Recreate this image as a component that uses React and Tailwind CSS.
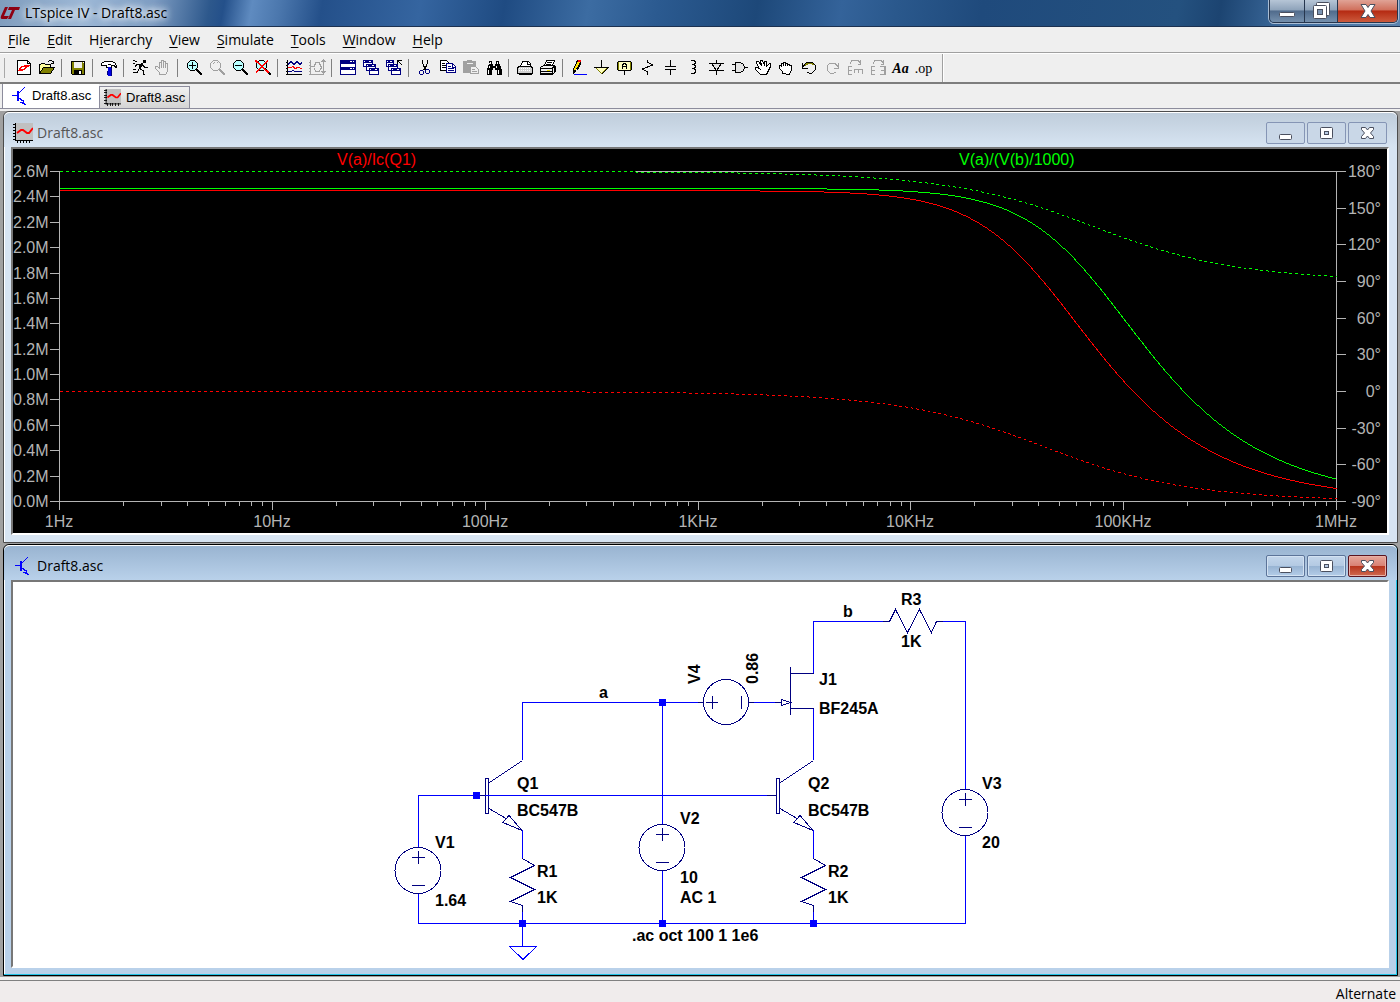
import React from "react";

const INK = "#000";
const NAVY = "#000080";
const GREY = "#a0a0a0";

function Glyph({ children, size = 18 }) {
  return (
    <svg
      width={size}
      height={size}
      viewBox="0 0 18 18"
      fill="none"
      stroke={INK}
      shapeRendering="crispEdges"
      aria-hidden="true"
    >
      {children}
    </svg>
  );
}

function Lens({ color, fill, children }) {
  return (
    <Glyph>
      <path d="M5.5 1.5h4l3 3v4l-3 3h-4l-3-3v-4z" stroke={color} fill={fill} />
      <path d="M11 10l6 6M12 10l5 5M11 11l5 5" stroke={color} />
      {children}
    </Glyph>
  );
}

function MiniWindow({ x, y, w = 9, h = 6 }) {
  return (
    <g>
      <rect x={x + 0.5} y={y + 0.5} width={w} height={h} fill="#fff" stroke={NAVY} />
      <path d={`M${x} ${y + 1.5}h${w + 1}`} stroke={NAVY} strokeWidth="3" />
      <path d={`M${x + w - 3} ${y + 1.5}h2M${x + 1} ${y + 1.5}h1`} stroke="#fff" />
    </g>
  );
}

const HAND =
  "M5.5 15.5v-2l-4-4v-2h2l2 2v-6h2v4-6h2v6-5h2v6-4h2v8l-2 3z";
const GRAB =
  "M5.5 14.5v-2l-3-3v-3h2v1-3h2v-1h2v1h2v1h2v1h2v5l-2 3v1z";

const icons = {
  New: (
    <Glyph>
      <path d="M2.5 1.5h10l3 3v11h-13z" fill="#fff" />
      <path d="M12.5 1.5v3h3" />
      <path d="M3 12l3-5h2l-2 3h3l-1 2zM9 6h6l-1 2h-2l-2 3h-2l2-3h-2z" fill="#f00" stroke="none" />
    </Glyph>
  ),
  Open: (
    <Glyph>
      <path d="M1.5 14.5v-9h1l1-1h3l1 1h5v3" fill="#ffff9c" />
      <path d="M1.5 14.5l4-6h11l-4 6z" fill="#808000" />
      <path d="M10 2.5h1M11 1.5h3M14 2.5h1M15.5 2v3M13 4.5h3" />
    </Glyph>
  ),
  Save: (
    <Glyph>
      <path d="M2.5 2.5h13v13h-12l-1-1z" fill="#808000" />
      <path d="M5 3h8v6h-8z" fill="#efefef" stroke="none" />
      <path d="M5 11h8v4h-8z" fill="#000" stroke="none" />
      <path d="M10 12h2v3h-2zM14 3h1v1h-1z" fill="#fff" stroke="none" />
    </Glyph>
  ),
  "Control Panel": (
    <Glyph>
      <path d="M1.5 6.5v-2l3-2h7l3 1 2 3v2l-2-1v-1h-3v2h-5v-2h-3z" fill="#fff" />
      <path d="M6 2.5h6M8 5.5h3" />
      <path d="M8 8h3v3h1v6h-4v-6z" fill="#0000e0" stroke="none" />
      <path d="M11.5 9v8M7.5 12v4" stroke="#000080" />
    </Glyph>
  ),
  Run: (
    <Glyph>
      <path d="M12 1h3v3h-3z" fill="#000" stroke="none" />
      <path d="M11.5 4.5l-4 5M10.5 4.5l-3 4M12 5l-3 5M6 5.5h5M12 6.5l2 2h3M6 5.5l-2 2M8 9.5l4 2v4h2M8 10.5l-2 3h-4M1.5 1.5h2M3.5 2.5h2M1.5 4.5h2M1.5 10.5h3" />
    </Glyph>
  ),
  Halt: (
    <Glyph>
      <path d={HAND} stroke={GREY} />
      <path d="M7.5 9v-6M9.5 9v-6M11.5 9v-5" stroke={GREY} />
    </Glyph>
  ),
  "Zoom in": (
    <Lens color={INK} fill="#b8ffff">
      <path d="M4 6.5h7M7.5 3v7" />
    </Lens>
  ),
  Pan: <Lens color={GREY} fill="none"><path d="M5 5l2-2M9 3h1" stroke={GREY} /></Lens>,
  "Zoom out": (
    <Lens color={INK} fill="#b8ffff">
      <path d="M4 6.5h7" />
    </Lens>
  ),
  "Zoom full": (
    <Lens color={INK} fill="#b8ffff">
      <path d="M1 1.5l13 12M2 1.5l13 12M14 1.5l-12 12" stroke="#f00" />
    </Lens>
  ),
  "Visible traces": (
    <Glyph>
      <path d="M2.5 1v15M1 15.5h16M1 3.5h2M1 6.5h2M1 9.5h2M1 12.5h2" />
      <path d="M3 5.5l3-3 3 3 3-3 3 3 2-2" stroke={NAVY} />
      <path d="M3 8.5h3l2-1 2 2 3-1 4 1" stroke="#f00" />
      <path d="M3 12.5h3l2-1 2 1h7" stroke={NAVY} />
    </Glyph>
  ),
  Autorange: (
    <Glyph>
      <path d="M2.5 1v15M1 15.5h15M1 3.5h2M1 6.5h2M1 9.5h2M1 12.5h2M3 7.5h3l2-4h3l2 4v2l-2 3h-3l-2-3M15.5 1v13M13.5 3l2-2 2 2M13.5 12l2 2 2-2" stroke={GREY} />
    </Glyph>
  ),
  "Tile windows": (
    <Glyph>
      <rect x="1.5" y="1.5" width="15" height="14" fill="#fff" stroke={NAVY} />
      <path d="M1 3h16M1 9h16" stroke={NAVY} strokeWidth="3" />
      <path d="M11 2.5h2M14 2.5h1M11 9.5h2M14 9.5h1" stroke="#fff" />
    </Glyph>
  ),
  "Cascade windows": (
    <Glyph>
      <MiniWindow x={1} y={1} />
      <MiniWindow x={4} y={5} />
      <MiniWindow x={7} y={9} />
    </Glyph>
  ),
  "Close all windows": (
    <Glyph>
      <MiniWindow x={1} y={1} w={7} />
      <MiniWindow x={3} y={5} />
      <MiniWindow x={6} y={9} />
      <path d="M12.5 5v-4h4M13 2l4 4" />
    </Glyph>
  ),
  Cut: (
    <Glyph>
      <path d="M6.5 1v3l1 2 1 3 2 2M11.5 1v3l-1 2-1 3-2 2" />
      <path d="M4.5 11.5h2l1 1v2l-1 1h-2l-1-1v-2zM10.5 10.5h2l1 1v2l-1 1h-2l-1-1v-2z" stroke={NAVY} />
    </Glyph>
  ),
  Copy: (
    <Glyph>
      <path d="M1.5 1.5h6l2 2v8h-8z" fill="#fff" />
      <path d="M3 4.5h3M3 6.5h4M3 8.5h4" />
      <path d="M7.5 4.5h6l3 3v6h-9z" fill="#fff" stroke={NAVY} />
      <path d="M13.5 5v3h3M9 7.5h3M9 9.5h6M9 11.5h6" stroke={NAVY} />
    </Glyph>
  ),
  Paste: (
    <Glyph>
      <path d="M1 2h4v-1h5v1h4v5h-6v7h-7z" fill={GREY} stroke="none" />
      <path d="M5 4.5h6" stroke="#efefef" />
      <path d="M8.5 7.5h5l3 3v4h-8z" stroke={GREY} fill="#efefef" />
      <path d="M10 10.5h3M10 12.5h5" stroke={GREY} />
    </Glyph>
  ),
  Find: (
    <Glyph>
      <path d="M4 2h3v3h1v2h2v-2h1v-3h3v3h1l2 6v5h-5v-5h-2v-2h-2v2h-1v5h-5v-5l2-6h1z" fill="#000" stroke="none" />
      <path d="M5.5 3v2M12.5 3v2M4.5 7v2M3.5 11v4M11.5 7v2M13.5 11v4" stroke="#fff" />
    </Glyph>
  ),
  "Print setup": (
    <Glyph>
      <path d="M4.5 7.5l2-5h6l2 2v3" fill="#fff" />
      <path d="M11.5 2v3h3" />
      <path d="M2.5 7.5h13l1 2v5h-15v-5z" fill="#d0d0d0" />
      <path d="M3 9.5h12M3 11.5h12" stroke="#fff" strokeDasharray="1 1" />
      <path d="M3 15.5h13" />
    </Glyph>
  ),
  Print: (
    <Glyph>
      <path d="M5.5 6.5l2-5h8l-2 5z" fill="#fff" />
      <path d="M8 3.5h5M7 5.5h5" />
      <path d="M1.5 8.5l3-2h11l1 1v5l-3 3h-12z" fill="#efefef" />
      <path d="M2 9.5h11l3-3M13.5 9v6M2 12.5h11M2 14.5h11M15.5 8v5" />
      <path d="M8 11.5h3" stroke="#e8d800" />
    </Glyph>
  ),
  Wire: (
    <Glyph>
      <path d="M3.5 12.5v-2l4-9 3 2-4 7z" fill="#ffe000" />
      <path d="M8 1h3v2h-3z" fill="#f00" stroke="none" />
      <path d="M10.5 3v2l-3 6M3.5 11v4M4.5 12v2M5.5 11v2" />
      <path d="M4 15.5h13" stroke="#00f" />
    </Glyph>
  ),
  Ground: (
    <Glyph>
      <path d="M8.5 1v8" />
      <path d="M2.5 8.5h12l-6 6z" fill="#ffffc0" stroke="#808000" />
      <path d="M1 8.5h15M8.5 15.5l7-7" />
    </Glyph>
  ),
  "Label net": (
    <Glyph>
      <path d="M2.5 2.5h12l1 1v7l-1 1h-12l-1-1v-7z" fill="#ffffc0" />
      <path d="M2.5 3v8M14.5 3v8" stroke="#808000" />
      <path d="M6.5 10v-5h1v-1h2v1h1v5M7 7.5h3M8.5 12v4" />
    </Glyph>
  ),
  Resistor: <Glyph><path d="M8.5 1v2l5 3-10 4 5 3v3" /></Glyph>,
  Capacitor: <Glyph><path d="M8.5 1v6M8.5 10v6M3 7.5h11M3 10.5h11" /></Glyph>,
  Inductor: <Glyph><path d="M6 1.5h3l1 1v2l-1 1h-2M7 5.5h2l1 1v2l-1 1h-2M7 9.5h2l1 1v3l-1 1h-3" /></Glyph>,
  Diode: (
    <Glyph>
      <path d="M1 4.5h15M1 11.5h15M8.5 11v5" />
      <path d="M3.5 4.5l5 7 5-7z" fill="#e4e4e4" />
      <path d="M8.5 1v4" />
    </Glyph>
  ),
  Component: (
    <Glyph>
      <path d="M4.5 3.5h5l3 2 1 3-1 3-3 2h-5z" fill="#e4e4e4" />
      <path d="M1 5.5h3M1 11.5h3M13 8.5h4" />
    </Glyph>
  ),
  Move: (
    <Glyph>
      <path d="M6.5 15.5l-5-5v-2h2l2 1-3-5v-2h2l3 4-1-4v-1h2l2 5v-4h2v5l3-3h1v3l-2 4-2 4z" fill="#fff" />
    </Glyph>
  ),
  Drag: <Glyph><path d={GRAB} fill="#fff" /><path d="M6.5 7v-2M8.5 7v-3M10.5 7v-2" /></Glyph>,
  Undo: (
    <Glyph>
      <path d="M4 7l2-2 3-1h3l2 2" stroke="#808000" strokeWidth="2" />
      <path d="M2.5 4v5h5M3 8l3-4 3-1h3l3 3v5l-3 3h-3l-2-1" />
    </Glyph>
  ),
  Redo: (
    <Glyph>
      <path d="M15.5 4v5h-5M15 8l-3-4h-5l-3 3v4l3 3h4l2-1" stroke={GREY} />
    </Glyph>
  ),
  Rotate: (
    <Glyph>
      <path d="M6 7.5h-4v8h4M3 11.5h3M2.5 7v9M8 10.5h9M8.5 10v4M12.5 10v4M16.5 10v5M4 4.5l2-3h6l2 2M14.5 1v4h-3" stroke={GREY} />
    </Glyph>
  ),
  Mirror: (
    <Glyph>
      <path d="M6 7.5h-4v8h4M3 11.5h3M2.5 7v9M11 7.5h5v8h-5M12 11.5h3M15.5 7v9M4 4.5l2-3h6l2 2M14.5 1v4h-3" stroke={GREY} />
    </Glyph>
  ),
};

const toolGroups = [
  ["New", "Open"],
  ["Save"],
  ["Control Panel"],
  ["Run", "Halt"],
  ["Zoom in", "Pan", "Zoom out", "Zoom full"],
  ["Visible traces", "Autorange"],
  ["Tile windows", "Cascade windows", "Close all windows"],
  ["Cut", "Copy", "Paste", "Find"],
  ["Print setup", "Print"],
  ["Wire", "Ground", "Label net", "Resistor", "Capacitor", "Inductor", "Diode", "Component", "Move", "Drag", "Undo", "Redo", "Rotate", "Mirror", "Text", "SPICE directive"],
];

function ToolFace({ name }) {
  if (name === "Text") return <span className="font-['Liberation_Serif',serif] text-[14px] font-bold italic">Aa</span>;
  if (name === "SPICE directive") return <span className="font-['Liberation_Serif',serif] text-[14px]">.op</span>;
  return icons[name];
}

function Toolbar() {
  return (
    <div role="toolbar" className="flex h-[31px] items-center border-t border-b-2 border-t-white border-b-[#7d7d7d] bg-[#efefef]">
      <div className="ml-1 mr-[7px] h-5 w-px bg-[#a8a8a8]" />
      {toolGroups.map((group, i) => (
        <React.Fragment key={i}>
          {i > 0 && (
            <div className="flex w-2 justify-start pl-[3px]">
              <div className="h-[18px] w-px bg-[#808080]" />
            </div>
          )}
          {group.map((name) => (
            <button key={name} type="button" aria-label={name} className="flex h-6 w-[23px] items-center justify-center">
              <ToolFace name={name} />
            </button>
          ))}
        </React.Fragment>
      ))}
      <div className="ml-[7px] w-[2px] self-stretch border-l border-[#a0a0a0] bg-white" />
    </div>
  );
}

function Logo() {
  return (
    <svg width="20" height="14" viewBox="0 0 20 14" aria-hidden="true">
      <path d="M5 1h3L4 10h5l-2 3H2Q0 13 1 10z" fill="#8e0012" />
      <path d="M9 1h11l-1 3h-4l-4 9H8l4-9H8z" fill="#8e0012" />
    </svg>
  );
}

function TransistorIcon() {
  return (
    <svg width="16" height="20" viewBox="0 0 16 20" fill="none" stroke="#00f" shapeRendering="crispEdges" aria-hidden="true">
      <path d="M0 9.5h5M7 6.5h1M8 5.5h1M9 4.5h1M10 3.5h1M11 2.500h1M12 1.5h1" />
      <path d="M6 5v10" strokeWidth="2" />
      <path d="M7 12.5h2M8 13.500h2M9 14.500h2M8 16.500h4M10 17.5h3M11.5 14v4M12 18.5h2" />
    </svg>
  );
}

function WaveIcon({ size }) {
  return (
    <svg width={size} height={size} viewBox="0 0 20 20" fill="none" aria-hidden="true">
      <path d="M2 0h18v18H2z" fill="#c0c0c0" />
      <path d="M2.5 0v18M2 17.5h18" stroke="#000" />
      <path d="M0 1.5h3M0 4.5h3M0 7.5h3M0 10.5h3M0 13.5h3M0 16.5h3M4.5 17v3M7.5 17v3M10.5 17v3M13.5 17v3M16.5 17v3" stroke="#000" shapeRendering="crispEdges" />
      <path d="M4 10l4-3h2l4 3h2l4-5" stroke="#f00" strokeWidth="2" />
    </svg>
  );
}

function CaptionGlyph({ kind, big }) {
  const base = { fill: "#fff", stroke: "#4a4f5e", strokeWidth: 1 };
  return (
    <svg width="18" height="18" viewBox="0 0 18 18" aria-hidden="true">
      {kind === "Minimize" && <rect x={big ? 1.5 : 2.5} y="10.5" width={big ? 15 : 12} height={big ? 4 : 5} rx="1" {...base} />}
      {kind === "Maximize" && (
        <>
          <rect x="2.5" y="3.5" width="12" height="11" rx="1" {...base} />
          <rect x="6.5" y="7.5" width="4" height="3" {...base} fill="#b8cbe4" />
        </>
      )}
      {kind === "Restore" && (
        <>
          <rect x="4.5" y="0.5" width="13" height="13" rx="1" {...base} />
          <rect x="1.5" y="3.5" width="13" height="13" rx="1" {...base} />
          <rect x="5.5" y="7.5" width="5" height="5" {...base} fill="#7b94b2" />
        </>
      )}
      {kind === "Close" && (
        <path
          d={big ? "M2 2.5h5l2 3 2-3h5l-4 6.5 4 6.5h-5l-2-3-2 3H2l4-6.5z" : "M2.5 3.5h4l2 2.5 2-2.500h4v2L11.500 9l3 3.500v2h-4l-2-2.500-2 2.500h-4v-2l3-3.500-3-3.500z"}
          {...base}
        />
      )}
    </svg>
  );
}

function TitleBar() {
  return (
    <header className="flex h-[27px] items-start border-b border-[#1c3150] bg-[linear-gradient(100deg,#7f9cbd_0%,#9db8d6_6%,#7d9cc2_11%,#2d588c_15%,#24508a_16%,#5f8bc0_18%,#4b77ad_20%,#24508a_23%,#3565a0_30%,#1f4b82_36%,#3c6ca2_42%,#2b5a90_47%,#1d4879_54%,#34639a_60%,#2a588c_64%,#1f4a7c_70%,#24517f_84%,#1c4471_87%,#3f6d9f_92%,#5c83ad_100%)]">
      <div className="flex h-[26px] flex-1 items-center gap-[5px]">
        <Logo />
        <h1 className="font-['Open_Sans',sans-serif] text-[14px] leading-5 text-black [text-shadow:0_0_6px_#fff,0_0_8px_#fff,0_0_10px_#dbe8f6]">
          LTspice IV - Draft8.asc
        </h1>
      </div>
      <div className="mr-[2px] flex h-[23px] overflow-hidden rounded-b-[5px] border border-t-0 border-[#26364e] shadow-[0_0_0_1px_#a9bdd4]">
        <button type="button" aria-label="Minimize" className="flex w-[35px] items-center justify-center border-r border-[#26364e] bg-[linear-gradient(#b6c5d6_0%,#8ea3ba_45%,#506b8c_50%,#7590ad_100%)]">
          <CaptionGlyph kind="Minimize" big />
        </button>
        <button type="button" aria-label="Restore" className="flex w-[33px] items-center justify-center border-r border-[#26364e] bg-[linear-gradient(#b6c5d6_0%,#8ea3ba_45%,#506b8c_50%,#7590ad_100%)]">
          <CaptionGlyph kind="Restore" big />
        </button>
        <button type="button" aria-label="Close" className="flex w-[59px] items-center justify-center bg-[linear-gradient(#e0a396_0%,#d0705c_45%,#b52a12_50%,#cc5a3c_100%)]">
          <CaptionGlyph kind="Close" big />
        </button>
      </div>
    </header>
  );
}

const menus = [
  ["", "F", "ile"],
  ["", "E", "dit"],
  ["H", "i", "erarchy"],
  ["", "V", "iew"],
  ["", "S", "imulate"],
  ["", "T", "ools"],
  ["", "W", "indow"],
  ["", "H", "elp"],
];

function MenuBar() {
  return (
    <nav className="flex h-[26px] items-center gap-px border-b border-[#a0a0a0] bg-[#efefef] font-['Open_Sans',sans-serif] text-[14px] leading-5">
      {menus.map(([pre, key, post]) => (
        <button key={pre + key + post} type="button" className="px-2">
          {pre}
          <span className="underline underline-offset-2">{key}</span>
          {post}
        </button>
      ))}
    </nav>
  );
}

function Tabs() {
  return (
    <div role="tablist" className="flex h-[25px] items-end border-b border-[#8c8c9c] bg-[#efefef] pl-[2px] text-[13px]">
      <button role="tab" aria-selected="true" type="button" className="flex h-6 w-[97px] items-center gap-[4px] self-start border-l border-[#8c8c9c] bg-white pl-[9px]">
        <TransistorIcon />
        Draft8.asc
      </button>
      <button role="tab" aria-selected="false" type="button" className="flex h-[22px] w-[91px] items-center gap-[5px] border border-b-0 border-[#8c8c9c] bg-linear-to-b from-[#f2f2f2] to-[#d4d4d4] pl-1">
        <WaveIcon size={17} />
        Draft8.asc
      </button>
    </div>
  );
}

function CaptionButtons({ active }) {
  const plain = active
    ? "flex h-[22px] w-[39px] items-center justify-center rounded-[2px] border border-[#5c7499] bg-[linear-gradient(#c3d6eb_0%,#b4cae3_48%,#98b4d3_52%,#b4cde8_100%)] shadow-[inset_0_0_0_1px_#d3e2f2]"
    : "flex h-[22px] w-[39px] items-center justify-center rounded-[2px] border border-[#8595b5] bg-[#c9d7e7]";
  const close = active
    ? "flex h-[22px] w-[39px] items-center justify-center rounded-[2px] border border-[#5a1420] bg-[linear-gradient(#e6a79b_0%,#d98275_48%,#b8351d_52%,#cf6a50_100%)] shadow-[inset_0_0_0_1px_#e8b0a6]"
    : plain;
  return (
    <div className="flex gap-[2px]">
      <button type="button" aria-label="Minimize" className={plain}><CaptionGlyph kind="Minimize" /></button>
      <button type="button" aria-label="Maximize" className={plain}><CaptionGlyph kind="Maximize" /></button>
      <button type="button" aria-label="Close" className={close}><CaptionGlyph kind="Close" /></button>
    </div>
  );
}

function ChildWindow({ icon, active, children }) {
  const frame = active
    ? "rounded-t-[6px] border border-black bg-[#b9d1ea] pb-[7px] shadow-[inset_-1px_-1px_0_#22c3e6,inset_1px_1px_0_#fff]"
    : "rounded-t-[6px] border border-[#4c4c4c] bg-[#d7e4f2] pb-[7px] shadow-[inset_1px_1px_0_#fff]";
  const title = active
    ? "flex h-[35px] items-center gap-1 rounded-t-[6px] border-t border-white bg-linear-to-b from-[#99b4d1] to-[#b9d1ea] pl-[9px] pr-[10px] pt-[6px]"
    : "flex h-[35px] items-center gap-1 rounded-t-[6px] border-t border-white bg-linear-to-b from-[#bfcddb] to-[#d7e4f2] pl-[9px] pr-[10px] pt-[6px] text-[#555]";
  return (
    <section className={frame}>
      <div className={title}>
        <div className="flex w-5 justify-center">{icon}</div>
        <h2 className="flex-1 font-['Open_Sans',sans-serif] text-[14px] leading-5">Draft8.asc</h2>
        <CaptionButtons active={active} />
      </div>
      <div className="ml-[7px] mr-2 border-2 border-t-[#777] border-l-[#777] border-r-white border-b-white">{children}</div>
    </section>
  );
}

const X0 = 59;
const X1 = 1336;
const TOP = 171;
const BOTTOM = 501;
const DECADE = (X1 - X0) / 6;

function trace(fn) {
  const pts = [];
  for (let x = X0; x <= X1; x += 1) pts.push([x, fn(Math.pow(10, (x - X0) / DECADE))]);
  return "M" + pts.map(([x, y]) => `${x + 0.5} ${Math.floor(y) + 0.5}`).join("L");
}
const gain = (a, fc) => trace((f) => BOTTOM + 0.5 - ((a / Math.hypot(1, f / fc)) * (BOTTOM - TOP)) / 2.6);
const phase = (start, fc) =>
  trace((f) => TOP + 0.5 + ((180 - start + (Math.atan(f / fc) * 180) / Math.PI) * (BOTTOM - TOP)) / 270);

function Plot() {
  const left = Array.from({ length: 14 }, (_, i) => ({ y: Math.round(TOP + (i * 330) / 13), t: (2.6 - i * 0.2).toFixed(1) + "M" }));
  const right = Array.from({ length: 10 }, (_, i) => ({ y: Math.round(TOP + (i * 330) / 9), t: 180 - i * 30 + "°" }));
  const bottom = ["1Hz", "10Hz", "100Hz", "1KHz", "10KHz", "100KHz", "1MHz"];
  return (
    <svg viewBox="13 149 1374 384" className="block h-auto w-full bg-black font-['Liberation_Sans',sans-serif] text-[16px]" role="img" aria-label="AC analysis">
      <g stroke="#b4b4b4" shapeRendering="crispEdges">
        <path d={`M${X0 + 0.5} 171v338M${X1 + 0.5} 171v338M50 501.5h1296M636 171.5h710`} />
        {left.map((l) => <path key={l.t} d={`M50 ${l.y + 0.5}h10`} />)}
        {right.map((r) => <path key={r.t} d={`M1336 ${r.y + 0.5}h10`} />)}
        {bottom.map((b, d) => (
          <React.Fragment key={b}>
            <path d={`M${Math.round(X0 + d * DECADE) + 0.5} 501v9`} />
            {d < 6 && [2, 3, 4, 5, 6, 7, 8, 9].map((m) => (
              <path key={m} d={`M${Math.round(X0 + (d + Math.log10(m)) * DECADE) + 0.5} 501v5`} />
            ))}
          </React.Fragment>
        ))}
      </g>
      <g fill="#b4b4b4">
        {left.map((l) => <text key={l.t} x="13" y={l.y + 6}>{l.t}</text>)}
        {right.map((r) => <text key={r.t} x="1381" y={r.y + 6} textAnchor="end">{r.t}</text>)}
        {bottom.map((b, d) => <text key={b} x={Math.round(X0 + d * DECADE)} y="527" textAnchor="middle">{b}</text>)}
      </g>
      <text x="337" y="165" fill="#f00">V(a)/Ic(Q1)</text>
      <text x="959" y="165" fill="#0f0">V(a)/(V(b)/1000)</text>
      <g fill="none" strokeWidth="1" shapeRendering="crispEdges">
        <path d={gain(2.449, 42000)} stroke="#f00" />
        <path d={phase(0, 42000)} stroke="#f00" strokeDasharray="3 3" />
        <path d={gain(2.466, 72000)} stroke="#0f0" />
        <path d={phase(180, 72000)} stroke="#0f0" strokeDasharray="3 3" />
      </g>
    </svg>
  );
}

function Source({ x, y }) {
  return (
    <g>
      <circle cx={x} cy={y} r="23" />
      <path d={`M${x - 6} ${y - 13}h13M${x + 0.5} ${y - 20}v13M${x - 6} ${y + 15}h13`} />
    </g>
  );
}

function Npn({ x }) {
  return (
    <path
      d={`M${x + 0.5} 760.5l-33 22M${x - 36.5} 778.5h3v35h-3zM${x - 33} 808.5l17 10M${x - 19} 822.5l6-7 13 15zM${x - 46} 795.5h9`}
    />
  );
}

const resistor = (x) => `M${x + 0.5} 858.5l12 7-24 12 24 12-24 12 12 4v6`;

const labels = [
  ["a", 599, 698], ["b", 843, 617], ["Q1", 517, 789], ["BC547B", 517, 816], ["Q2", 808, 789], ["BC547B", 808, 816],
  ["V1", 435, 848], ["1.64", 435, 906], ["R1", 537, 877], ["1K", 537, 903], ["V2", 680, 824], ["10", 680, 883],
  ["AC 1", 680, 903], ["R2", 828, 877], ["1K", 828, 903], ["J1", 819, 685], ["BF245A", 819, 714], ["R3", 901, 605],
  ["1K", 901, 647], ["V3", 982, 789], ["20", 982, 848], [".ac oct 100 1 1e6", 632, 941],
];

function Schematic() {
  return (
    <svg viewBox="13 582 1374 384" className="block h-auto w-full bg-white font-['Liberation_Sans',sans-serif] text-[16px] font-bold" role="img" aria-label="Schematic">
      <g fill="none" stroke="#00f" shapeRendering="crispEdges">
        <path d="M522.5 760v-57.5h181M748 702.5h33M662.5 702v122M662.5 870v53M418.5 847v-51.5h358M418.5 893v30.5h547v-88M965.5 789v-167.5h-29M889 621.5h-75.5v52M813.5 708v52M522.5 830v28M522.5 911v12M813.5 830v28M813.5 911v12M522.5 923v23.5M509.5 946.5h27l-13.5 13z" />
      </g>
      <g fill="none" stroke={NAVY} shapeRendering="crispEdges">
        <Source x={418} y={870.5} />
        <Source x={662} y={847.5} />
        <Source x={965} y={812.5} />
        <circle cx="726" cy="702" r="22.5" />
        <path d="M706 702.5h12M712.5 696v13M741.5 696v13M698 702.5h6M748 702.5h6" />
        <Npn x={522} />
        <Npn x={813} />
        <path d="M790.5 667v48M790 673.5h24M790 708.5h24M781.5 699.5v6l9-3zM775 702.5h6" />
        <path d={resistor(522)} />
        <path d={resistor(813)} />
        <path d="M883 621.5h6.5l6-12 12 23 12-23 12 23 5-11h6" />
      </g>
      <path d="M485 795.5h10" stroke="#00f" shapeRendering="crispEdges" />
      <g fill="#00f">
        {[[522, 923], [662, 923], [813, 923], [662, 702], [476, 795]].map(([x, y]) => (
          <rect key={`${x}-${y}`} x={x - 3} y={y - 3} width="7" height="7" />
        ))}
      </g>
      <g fill="#000">
        {labels.map(([t, x, y]) => <text key={`${t}${x}${y}`} x={x} y={y}>{t}</text>)}
        <text transform="translate(700 684) rotate(-90)">V4</text>
        <text transform="translate(758 684) rotate(-90)">0.86</text>
      </g>
    </svg>
  );
}

export default function App() {
  return (
    <div className="flex min-h-screen flex-col bg-[#efefef] font-['Liberation_Sans',sans-serif] text-black">
      <TitleBar />
      <MenuBar />
      <Toolbar />
      <Tabs />
      <main className="mt-[2px] flex flex-col gap-px border-l border-[#a0a0a0] bg-[#a0a0a0] pl-[2px] pr-[2px] pb-px">
        <ChildWindow icon={<WaveIcon size={20} />}>
          <Plot />
        </ChildWindow>
        <ChildWindow active icon={<TransistorIcon />}>
          <Schematic />
        </ChildWindow>
      </main>
      <footer className="mt-[3px] flex flex-1 items-center justify-end border-t border-[#808080] bg-[#f0ecec] pr-1 pt-1 font-['Open_Sans',sans-serif] text-[14px] leading-4">
        Alternate
      </footer>
    </div>
  );
}
